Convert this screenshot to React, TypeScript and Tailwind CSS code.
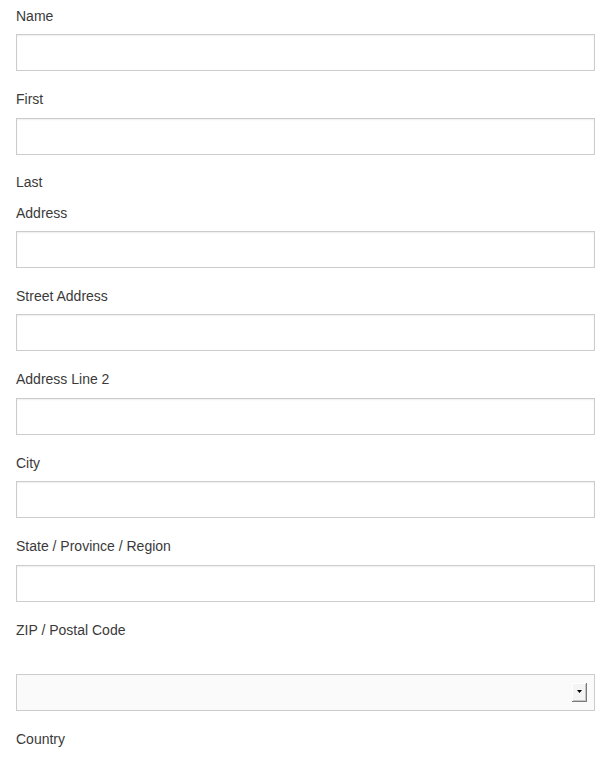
import React from 'react';

// Address form: labels sit under the inputs as sub-labels, except the group labels.

function TextInput() {
  return (
    <input
      type="text"
      className="block h-[37px] w-[579px] border border-[#cccccc] bg-white px-2 shadow-[inset_0_1px_2px_rgba(0,0,0,0.07)] outline-none"
    />
  );
}

function SubLabel({ children }: { children: React.ReactNode }) {
  return <div className="mt-[18px] mb-[8.5px] h-5 text-[14px] leading-5 text-[#3a3a3a]">{children}</div>;
}

function GroupLabel({ children, className = '' }: { children: React.ReactNode; className?: string }) {
  return <div className={`h-5 text-[14px] leading-5 text-[#3a3a3a] ${className}`}>{children}</div>;
}

function FakeSelect() {
  return (
    <div className="relative h-[37px] w-[579px] border border-[#cccccc] bg-[#fafafa]">
      <div className="absolute left-[555px] top-[8px] flex h-[19px] w-[15px] items-center justify-center border-b border-r border-b-[#7a7a7a] border-r-[#7a7a7a] bg-[#f4f4f4] shadow-[inset_1px_1px_0_#ffffff,inset_-1px_-1px_0_#c6c6c6]">
        <svg width="5" height="3" viewBox="0 0 5 3">
          <path d="M0 0h5L2.5 3z" fill="#000" />
        </svg>
      </div>
    </div>
  );
}

export default function App() {
  return (
    <div className="min-h-[760px] bg-white pl-4 pt-[6px]" style={{ fontFamily: '"Liberation Sans", Arial, sans-serif' }}>
      <GroupLabel className="mb-2">Name</GroupLabel>
      <TextInput />
      <SubLabel>First</SubLabel>
      <TextInput />
      <GroupLabel className="mt-[17px]">Last</GroupLabel>

      <GroupLabel className="mt-[11px] mb-2">Address</GroupLabel>
      <TextInput />
      <SubLabel>Street Address</SubLabel>
      <TextInput />
      <SubLabel>Address Line 2</SubLabel>
      <TextInput />
      <SubLabel>City</SubLabel>
      <TextInput />
      <SubLabel>State / Province / Region</SubLabel>
      <TextInput />
      <GroupLabel className="mt-[18px] mb-[34px]">ZIP / Postal Code</GroupLabel>
      <FakeSelect />
      <GroupLabel className="mt-[18px]">Country</GroupLabel>
    </div>
  );
}
